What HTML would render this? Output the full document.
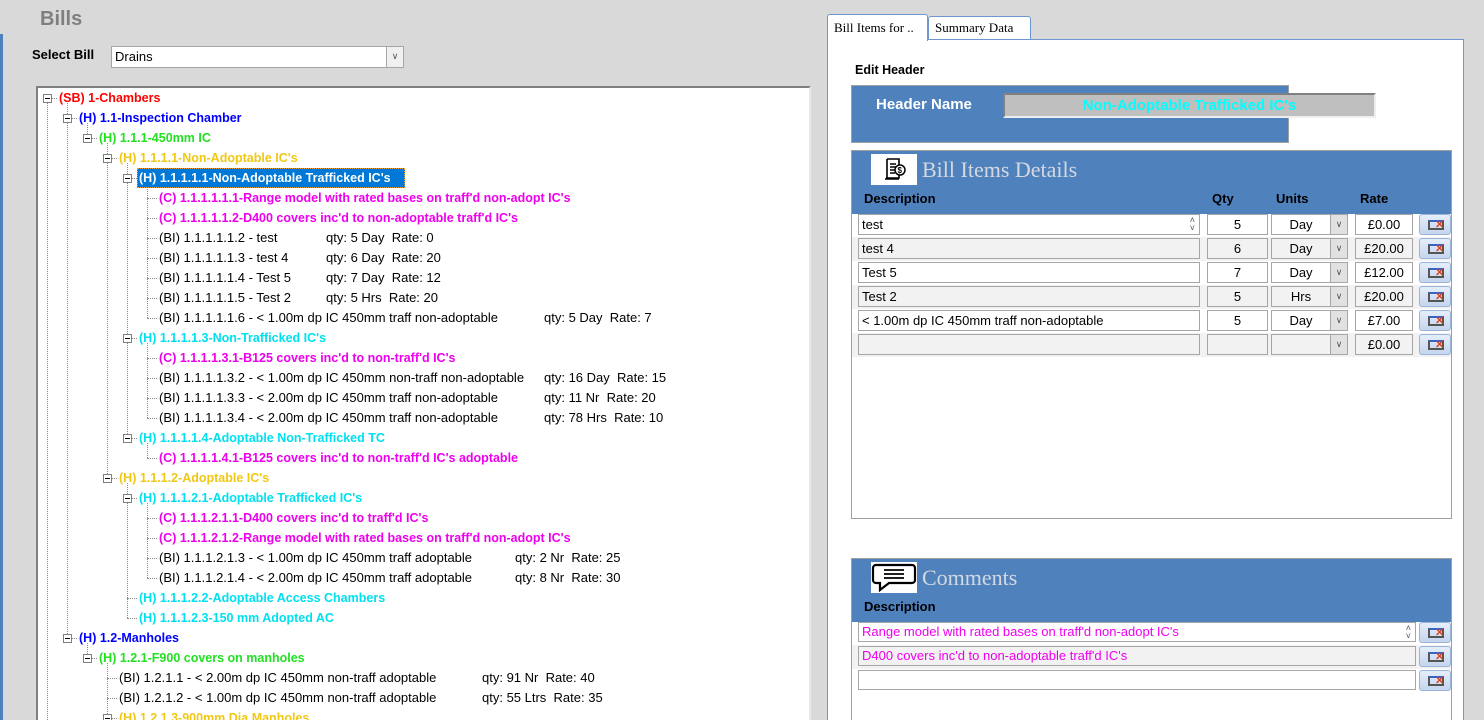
<!DOCTYPE html>
<html style="overflow:hidden;height:720px"><head><meta charset="utf-8"><style>
*{box-sizing:border-box;margin:0;padding:0}
body{width:1484px;height:720px;background:#d9d9d9;position:relative;overflow:hidden;font-family:"Liberation Sans",sans-serif;font-size:12px;color:#000}
.a{position:absolute}
.t{position:absolute;white-space:nowrap;font-size:13px;line-height:16px;height:16px}
.b{font-weight:bold;font-size:12.5px}
.red{color:#ff0000}.blu{color:#0000ff}.grn{color:#22e022}.gld{color:#f0c814}.cyn{color:#00e0f0}.mag{color:#ee00ee}
.v{position:absolute;width:0;border-left:1px dotted #8a8a8a}
.h{position:absolute;height:0;border-top:1px dotted #8a8a8a}
.bx{position:absolute;width:9px;height:9px;border:1px solid #808080;background:#fff}
.bx:after{content:"";position:absolute;left:1px;top:3px;width:5px;height:1px;background:#000}
.inp{position:absolute;height:21px;border:1px solid #a6a6a6;background:#fff;font-size:13px;line-height:19px;padding-left:3px;white-space:nowrap;overflow:hidden}
.g{background:#f2f2f2}
.dd{position:absolute;right:0;top:0;width:17px;height:19px;background:#e1e1e1;border-left:1px solid #a6a6a6;font-size:9px;color:#555;text-align:center;line-height:19px}
.del{position:absolute;width:32px;height:21px;border:1px solid #9bb3d6;border-radius:3px;background:linear-gradient(#e6eefa,#c4d5ee)}
.del:before{content:"";position:absolute;left:8px;top:5px;width:12px;height:6px;border:2px solid #555;border-top-color:#3366cc}
.del:after{content:"✕";position:absolute;left:15px;top:4px;font-size:11px;font-weight:bold;color:#e04020;line-height:12px}
.ctr{text-align:center;padding-left:0}
</style></head><body>

<div class="a" style="left:0;top:34px;width:3px;height:686px;background:#4f81bd"></div>
<div class="t" style="left:40px;top:8px;font-size:20px;line-height:22px;height:22px;color:#7f7f7f;font-weight:bold">Bills</div>
<div class="t" style="left:32px;top:47px;font-size:13px;font-weight:bold">Select Bill</div>
<div class="inp" style="left:111px;top:46px;width:293px;height:22px;border-color:#a6a6a6">Drains<div class="dd" style="height:20px;background:#f0f0f0">&#8744;</div></div>

<!-- tree -->
<div class="a" style="left:36px;top:86px;width:775px;height:640px;background:#fff;border-top:2px solid #7f7f7f;border-left:2px solid #7f7f7f;border-right:2px solid #e8e8e8"></div>

<div class="v" style="left:47px;top:103px;height:617px"></div>
<div class="v" style="left:67px;top:103px;height:535px"></div>
<div class="v" style="left:87px;top:123px;height:15px"></div>
<div class="v" style="left:87px;top:643px;height:15px"></div>
<div class="v" style="left:107px;top:143px;height:335px"></div>
<div class="v" style="left:107px;top:663px;height:57px"></div>
<div class="v" style="left:127px;top:163px;height:275px"></div>
<div class="v" style="left:127px;top:483px;height:135px"></div>
<div class="v" style="left:147px;top:183px;height:135px"></div>
<div class="v" style="left:147px;top:343px;height:75px"></div>
<div class="v" style="left:147px;top:443px;height:15px"></div>
<div class="v" style="left:147px;top:503px;height:75px"></div>

<div class="h" style="left:47px;top:98px;width:10px"></div>
<div class="h" style="left:67px;top:118px;width:10px"></div>
<div class="h" style="left:87px;top:138px;width:10px"></div>
<div class="h" style="left:107px;top:158px;width:10px"></div>
<div class="h" style="left:127px;top:178px;width:10px"></div>
<div class="h" style="left:147px;top:198px;width:10px"></div>
<div class="h" style="left:147px;top:218px;width:10px"></div>
<div class="h" style="left:147px;top:238px;width:10px"></div>
<div class="h" style="left:147px;top:258px;width:10px"></div>
<div class="h" style="left:147px;top:278px;width:10px"></div>
<div class="h" style="left:147px;top:298px;width:10px"></div>
<div class="h" style="left:147px;top:318px;width:10px"></div>
<div class="h" style="left:127px;top:338px;width:10px"></div>
<div class="h" style="left:147px;top:358px;width:10px"></div>
<div class="h" style="left:147px;top:378px;width:10px"></div>
<div class="h" style="left:147px;top:398px;width:10px"></div>
<div class="h" style="left:147px;top:418px;width:10px"></div>
<div class="h" style="left:127px;top:438px;width:10px"></div>
<div class="h" style="left:147px;top:458px;width:10px"></div>
<div class="h" style="left:107px;top:478px;width:10px"></div>
<div class="h" style="left:127px;top:498px;width:10px"></div>
<div class="h" style="left:147px;top:518px;width:10px"></div>
<div class="h" style="left:147px;top:538px;width:10px"></div>
<div class="h" style="left:147px;top:558px;width:10px"></div>
<div class="h" style="left:147px;top:578px;width:10px"></div>
<div class="h" style="left:127px;top:598px;width:10px"></div>
<div class="h" style="left:127px;top:618px;width:10px"></div>
<div class="h" style="left:67px;top:638px;width:10px"></div>
<div class="h" style="left:87px;top:658px;width:10px"></div>
<div class="h" style="left:107px;top:678px;width:10px"></div>
<div class="h" style="left:107px;top:698px;width:10px"></div>
<div class="h" style="left:107px;top:718px;width:10px"></div>

<div class="bx" style="left:43px;top:94px"></div>
<div class="bx" style="left:63px;top:114px"></div>
<div class="bx" style="left:83px;top:134px"></div>
<div class="bx" style="left:103px;top:154px"></div>
<div class="bx" style="left:123px;top:174px"></div>
<div class="bx" style="left:123px;top:334px"></div>
<div class="bx" style="left:123px;top:434px"></div>
<div class="bx" style="left:103px;top:474px"></div>
<div class="bx" style="left:123px;top:494px"></div>
<div class="bx" style="left:63px;top:634px"></div>
<div class="bx" style="left:83px;top:654px"></div>
<div class="bx" style="left:103px;top:714px"></div>

<div class="a" style="left:137px;top:168px;width:268px;height:20px;background:#0078d7;border:1px dotted #f0a030"></div>

<div class="t b red" style="left:59px;top:90px">(SB) 1-Chambers</div>
<div class="t b blu" style="left:79px;top:110px">(H) 1.1-Inspection Chamber</div>
<div class="t b grn" style="left:99px;top:130px">(H) 1.1.1-450mm IC</div>
<div class="t b gld" style="left:119px;top:150px">(H) 1.1.1.1-Non-Adoptable IC's</div>
<div class="t b" style="left:139px;top:170px;color:#fff">(H) 1.1.1.1.1-Non-Adoptable Trafficked IC's</div>
<div class="t b mag" style="left:159px;top:190px">(C) 1.1.1.1.1.1-Range model with rated bases on traff'd non-adopt IC's</div>
<div class="t b mag" style="left:159px;top:210px">(C) 1.1.1.1.1.2-D400 covers inc'd to non-adoptable traff'd IC's</div>
<div class="t" style="left:159px;top:230px">(BI) 1.1.1.1.1.2 - test</div><div class="t" style="left:326px;top:230px">qty: 5 Day&nbsp; Rate: 0</div>
<div class="t" style="left:159px;top:250px">(BI) 1.1.1.1.1.3 - test 4</div><div class="t" style="left:326px;top:250px">qty: 6 Day&nbsp; Rate: 20</div>
<div class="t" style="left:159px;top:270px">(BI) 1.1.1.1.1.4 - Test 5</div><div class="t" style="left:326px;top:270px">qty: 7 Day&nbsp; Rate: 12</div>
<div class="t" style="left:159px;top:290px">(BI) 1.1.1.1.1.5 - Test 2</div><div class="t" style="left:326px;top:290px">qty: 5 Hrs&nbsp; Rate: 20</div>
<div class="t" style="left:159px;top:310px">(BI) 1.1.1.1.1.6 - &lt; 1.00m dp IC 450mm traff non-adoptable</div><div class="t" style="left:544px;top:310px">qty: 5 Day&nbsp; Rate: 7</div>
<div class="t b cyn" style="left:139px;top:330px">(H) 1.1.1.1.3-Non-Trafficked IC's</div>
<div class="t b mag" style="left:159px;top:350px">(C) 1.1.1.1.3.1-B125 covers inc'd to non-traff'd IC's</div>
<div class="t" style="left:159px;top:370px">(BI) 1.1.1.1.3.2 - &lt; 1.00m dp IC 450mm non-traff non-adoptable</div><div class="t" style="left:544px;top:370px">qty: 16 Day&nbsp; Rate: 15</div>
<div class="t" style="left:159px;top:390px">(BI) 1.1.1.1.3.3 - &lt; 2.00m dp IC 450mm traff non-adoptable</div><div class="t" style="left:544px;top:390px">qty: 11 Nr&nbsp; Rate: 20</div>
<div class="t" style="left:159px;top:410px">(BI) 1.1.1.1.3.4 - &lt; 2.00m dp IC 450mm traff non-adoptable</div><div class="t" style="left:544px;top:410px">qty: 78 Hrs&nbsp; Rate: 10</div>
<div class="t b cyn" style="left:139px;top:430px">(H) 1.1.1.1.4-Adoptable Non-Trafficked TC</div>
<div class="t b mag" style="left:159px;top:450px">(C) 1.1.1.1.4.1-B125 covers inc'd to non-traff'd IC's adoptable</div>
<div class="t b gld" style="left:119px;top:470px">(H) 1.1.1.2-Adoptable IC's</div>
<div class="t b cyn" style="left:139px;top:490px">(H) 1.1.1.2.1-Adoptable Trafficked IC's</div>
<div class="t b mag" style="left:159px;top:510px">(C) 1.1.1.2.1.1-D400 covers inc'd to traff'd IC's</div>
<div class="t b mag" style="left:159px;top:530px">(C) 1.1.1.2.1.2-Range model with rated bases on traff'd non-adopt IC's</div>
<div class="t" style="left:159px;top:550px">(BI) 1.1.1.2.1.3 - &lt; 1.00m dp IC 450mm traff adoptable</div><div class="t" style="left:515px;top:550px">qty: 2 Nr&nbsp; Rate: 25</div>
<div class="t" style="left:159px;top:570px">(BI) 1.1.1.2.1.4 - &lt; 2.00m dp IC 450mm traff adoptable</div><div class="t" style="left:515px;top:570px">qty: 8 Nr&nbsp; Rate: 30</div>
<div class="t b cyn" style="left:139px;top:590px">(H) 1.1.1.2.2-Adoptable Access Chambers</div>
<div class="t b cyn" style="left:139px;top:610px">(H) 1.1.1.2.3-150 mm Adopted AC</div>
<div class="t b blu" style="left:79px;top:630px">(H) 1.2-Manholes</div>
<div class="t b grn" style="left:99px;top:650px">(H) 1.2.1-F900 covers on manholes</div>
<div class="t" style="left:119px;top:670px">(BI) 1.2.1.1 - &lt; 2.00m dp IC 450mm non-traff adoptable</div><div class="t" style="left:482px;top:670px">qty: 91 Nr&nbsp; Rate: 40</div>
<div class="t" style="left:119px;top:690px">(BI) 1.2.1.2 - &lt; 1.00m dp IC 450mm non-traff adoptable</div><div class="t" style="left:482px;top:690px">qty: 55 Ltrs&nbsp; Rate: 35</div>
<div class="t b gld" style="left:119px;top:710px">(H) 1.2.1.3-900mm Dia Manholes</div>

<!-- right panel -->
<div class="a" style="left:827px;top:39px;width:637px;height:690px;background:#fff;border:1px solid #6f97cf"></div>
<div class="a" style="left:827px;top:14px;width:101px;height:27px;background:#fff;border:1px solid #6f97cf;border-bottom:none;border-radius:3px 3px 0 0;font-family:'Liberation Serif',serif;font-size:13px;line-height:26px;padding-left:6px">Bill Items for ..</div>
<div class="a" style="left:928px;top:16px;width:103px;height:24px;background:#fff;border:1px solid #6f97cf;border-radius:3px 3px 0 0;font-family:'Liberation Serif',serif;font-size:13px;line-height:22px;padding-left:6px">Summary Data</div>

<div class="t" style="left:855px;top:62px;font-size:12.5px;font-weight:bold">Edit Header</div>
<div class="a" style="left:851px;top:85px;width:438px;height:58px;background:#4f81bd;border:1px solid #a0a0a0"></div>
<div class="t" style="left:876px;top:96px;font-size:15px;line-height:18px;color:#fff;font-weight:bold">Header Name</div>
<div class="a" style="left:1003px;top:93px;width:373px;height:25px;background:#bfbfbf;border:2px solid #808080;border-right-color:#eee;border-bottom-color:#eee;text-align:center;font-weight:bold;font-size:15px;line-height:21px;color:#00ffff">Non-Adoptable Trafficked IC's</div>

<div class="a" style="left:851px;top:150px;width:601px;height:369px;background:#fff;border:1px solid #a0a0a0"></div>
<div class="a" style="left:852px;top:151px;width:599px;height:63px;background:#4f81bd"></div>
<div class="a" style="left:871px;top:154px;width:46px;height:31px;background:#fff">
<svg width="46" height="31" viewBox="0 0 46 31"><path d="M16 5h12v19h-13M16 5v20M14 25h14M19 10h6M19 13h6M19 16h5M19 19h5" stroke="#000" stroke-width="1.6" fill="none"/><circle cx="29" cy="16" r="5" fill="#fff" stroke="#000" stroke-width="1.5"/><text x="26.5" y="19" font-size="8" font-family="Liberation Sans" font-weight="bold">$</text></svg></div>
<div class="t" style="left:922px;top:156px;height:28px;font-family:'Liberation Serif',serif;font-size:22px;line-height:28px;color:#d4d9e0">Bill Items Details</div>
<div class="t" style="left:864px;top:191px;font-size:13px;font-weight:bold">Description</div>
<div class="t" style="left:1212px;top:191px;font-size:13px;font-weight:bold">Qty</div>
<div class="t" style="left:1276px;top:191px;font-size:13px;font-weight:bold">Units</div>
<div class="t" style="left:1360px;top:191px;font-size:13px;font-weight:bold">Rate</div>

<div class="a g" style="left:852px;top:237px;width:599px;height:24px"></div>
<div class="a g" style="left:852px;top:285px;width:599px;height:24px"></div>
<div class="a g" style="left:852px;top:333px;width:599px;height:24px"></div>

<div class="inp" style="left:858px;top:214px;width:342px">test<span class="a" style="right:4px;top:1px;font-size:9px;line-height:8px;color:#555">&#708;<br>&#709;</span></div>
<div class="inp ctr" style="left:1207px;top:214px;width:61px">5</div>
<div class="inp ctr" style="left:1271px;top:214px;width:77px;padding-right:17px">Day<div class="dd">&#8744;</div></div>
<div class="inp ctr" style="left:1355px;top:214px;width:58px">£0.00</div>
<div class="del" style="left:1419px;top:214px"></div>

<div class="inp g" style="left:858px;top:238px;width:342px">test 4</div>
<div class="inp ctr g" style="left:1207px;top:238px;width:61px">6</div>
<div class="inp ctr g" style="left:1271px;top:238px;width:77px;padding-right:17px">Day<div class="dd">&#8744;</div></div>
<div class="inp ctr g" style="left:1355px;top:238px;width:58px">£20.00</div>
<div class="del" style="left:1419px;top:238px"></div>

<div class="inp" style="left:858px;top:262px;width:342px">Test 5</div>
<div class="inp ctr" style="left:1207px;top:262px;width:61px">7</div>
<div class="inp ctr" style="left:1271px;top:262px;width:77px;padding-right:17px">Day<div class="dd">&#8744;</div></div>
<div class="inp ctr" style="left:1355px;top:262px;width:58px">£12.00</div>
<div class="del" style="left:1419px;top:262px"></div>

<div class="inp g" style="left:858px;top:286px;width:342px">Test 2</div>
<div class="inp ctr g" style="left:1207px;top:286px;width:61px">5</div>
<div class="inp ctr g" style="left:1271px;top:286px;width:77px;padding-right:17px">Hrs<div class="dd">&#8744;</div></div>
<div class="inp ctr g" style="left:1355px;top:286px;width:58px">£20.00</div>
<div class="del" style="left:1419px;top:286px"></div>

<div class="inp" style="left:858px;top:310px;width:342px">&lt; 1.00m dp IC 450mm traff non-adoptable</div>
<div class="inp ctr" style="left:1207px;top:310px;width:61px">5</div>
<div class="inp ctr" style="left:1271px;top:310px;width:77px;padding-right:17px">Day<div class="dd">&#8744;</div></div>
<div class="inp ctr" style="left:1355px;top:310px;width:58px">£7.00</div>
<div class="del" style="left:1419px;top:310px"></div>

<div class="inp g" style="left:858px;top:334px;width:342px"></div>
<div class="inp ctr g" style="left:1207px;top:334px;width:61px"></div>
<div class="inp ctr g" style="left:1271px;top:334px;width:77px"><div class="dd">&#8744;</div></div>
<div class="inp ctr g" style="left:1355px;top:334px;width:58px">£0.00</div>
<div class="del" style="left:1419px;top:334px"></div>

<!-- comments -->
<div class="a" style="left:851px;top:558px;width:601px;height:170px;background:#fff;border:1px solid #a0a0a0"></div>
<div class="a" style="left:852px;top:559px;width:599px;height:63px;background:#4f81bd"></div>
<div class="a" style="left:871px;top:562px;width:46px;height:31px;background:#fff">
<svg width="46" height="31" viewBox="0 0 46 31"><path d="M5 3h36a3 3 0 0 1 3 3v12a3 3 0 0 1-3 3H18l-9 7v-7H5a3 3 0 0 1-3-3V6a3 3 0 0 1 3-3z" fill="#fff" stroke="#000" stroke-width="2.2"/><path d="M13 8h20M13 12h20M13 16h20" stroke="#000" stroke-width="1.8"/></svg></div>
<div class="t" style="left:922px;top:564px;height:28px;font-family:'Liberation Serif',serif;font-size:22px;line-height:28px;color:#d4d9e0">Comments</div>
<div class="t" style="left:864px;top:599px;font-size:13px;font-weight:bold">Description</div>
<div class="a g" style="left:852px;top:645px;width:599px;height:24px"></div>
<div class="inp" style="left:858px;top:622px;width:558px;color:#ee00ee;height:20px;line-height:18px">Range model with rated bases on traff'd non-adopt IC's<span class="a" style="right:4px;top:1px;font-size:9px;line-height:8px;color:#555">&#708;<br>&#709;</span></div>
<div class="del" style="left:1419px;top:622px"></div>
<div class="inp g" style="left:858px;top:646px;width:558px;color:#ee00ee;height:20px;line-height:18px">D400 covers inc'd to non-adoptable traff'd IC's</div>
<div class="del" style="left:1419px;top:646px"></div>
<div class="inp" style="left:858px;top:670px;width:558px;height:20px"></div>
<div class="del" style="left:1419px;top:670px"></div>
</body></html>
